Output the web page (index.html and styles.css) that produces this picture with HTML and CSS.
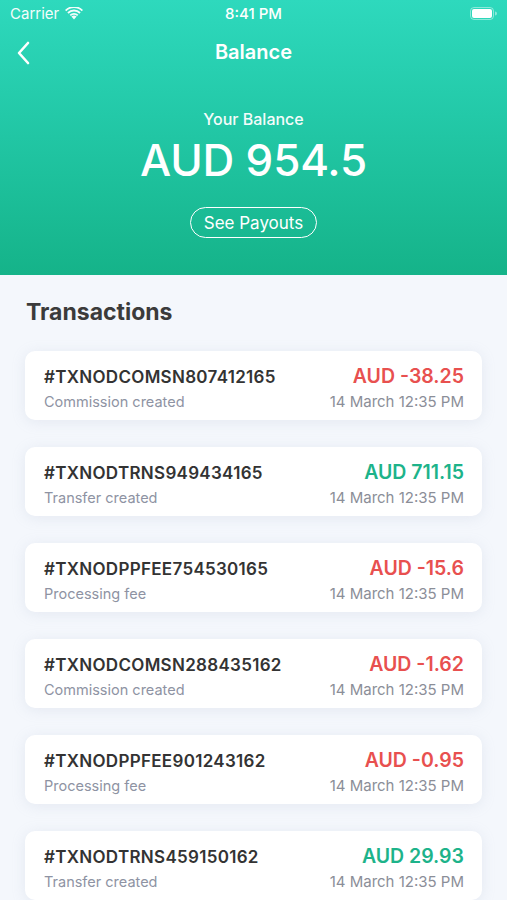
FILE: index.html
```html
<!DOCTYPE html>
<html lang="en">
<head>
  <meta charset="UTF-8">
  <link rel="stylesheet" href="styles.css">
</head>
<body>
  <!-- header with balance -->
  <div class="header">
    <div class="status-bar">
      <div class="status-left">
        <span>Carrier</span>
        <svg class="wifi" width="18" height="13" viewBox="0 0 18 13">
          <path d="M9 12.5 L6.4 9.6 A3.8 3.8 0 0 1 11.6 9.6 Z" fill="#fff"/>
          <path d="M4.6 7.7 A6.3 6.3 0 0 1 13.4 7.7 L12.1 9.1 A4.4 4.4 0 0 0 5.9 9.1 Z" fill="#fff"/>
          <path d="M2.3 5.3 A9.6 9.6 0 0 1 15.7 5.3 L14.4 6.7 A7.7 7.7 0 0 0 3.6 6.7 Z" fill="#fff"/>
          <path d="M0 2.9 A12.8 12.8 0 0 1 18 2.9 L16.7 4.3 A10.9 10.9 0 0 0 1.3 4.3 Z" fill="#fff"/>
        </svg>
      </div>
      <div class="status-time">8:41 PM</div>
      <div class="status-right">
        <svg width="27" height="13" viewBox="0 0 27 13">
          <rect x="0.5" y="0.5" width="23" height="12" rx="3.5" fill="none" stroke="rgba(255,255,255,0.45)"/>
          <rect x="2" y="2" width="20" height="9" rx="2" fill="#fff"/>
          <path d="M25 4.5 v4 a2 2 0 0 0 0 -4 z" fill="rgba(255,255,255,0.45)"/>
        </svg>
      </div>
    </div>

    <div class="nav-bar">
      <svg class="back" width="14" height="24" viewBox="0 0 14 24">
        <path d="M12 2 L3 12 L12 22" fill="none" stroke="#fff" stroke-width="2.6" stroke-linecap="round" stroke-linejoin="round"/>
      </svg>
      <div class="nav-title">Balance</div>
    </div>

    <div class="balance">
      <div class="balance-label">Your Balance</div>
      <div class="balance-amount">AUD 954.5</div>
      <div class="payouts-btn">See Payouts</div>
    </div>
  </div>

  <!-- transactions -->
  <div class="content">
    <h2 class="section-title">Transactions</h2>

    <div class="txn-list">
      <div class="txn-card">
        <div class="txn-row">
          <span class="txn-id">#TXNODCOMSN807412165</span>
          <span class="txn-amount neg">AUD -38.25</span>
        </div>
        <div class="txn-row">
          <span class="txn-type">Commission created</span>
          <span class="txn-date">14 March 12:35 PM</span>
        </div>
      </div>

      <div class="txn-card">
        <div class="txn-row">
          <span class="txn-id">#TXNODTRNS949434165</span>
          <span class="txn-amount pos">AUD 711.15</span>
        </div>
        <div class="txn-row">
          <span class="txn-type">Transfer created</span>
          <span class="txn-date">14 March 12:35 PM</span>
        </div>
      </div>

      <div class="txn-card">
        <div class="txn-row">
          <span class="txn-id">#TXNODPPFEE754530165</span>
          <span class="txn-amount neg">AUD -15.6</span>
        </div>
        <div class="txn-row">
          <span class="txn-type">Processing fee</span>
          <span class="txn-date">14 March 12:35 PM</span>
        </div>
      </div>

      <div class="txn-card">
        <div class="txn-row">
          <span class="txn-id">#TXNODCOMSN288435162</span>
          <span class="txn-amount neg">AUD -1.62</span>
        </div>
        <div class="txn-row">
          <span class="txn-type">Commission created</span>
          <span class="txn-date">14 March 12:35 PM</span>
        </div>
      </div>

      <div class="txn-card">
        <div class="txn-row">
          <span class="txn-id">#TXNODPPFEE901243162</span>
          <span class="txn-amount neg">AUD -0.95</span>
        </div>
        <div class="txn-row">
          <span class="txn-type">Processing fee</span>
          <span class="txn-date">14 March 12:35 PM</span>
        </div>
      </div>

      <div class="txn-card">
        <div class="txn-row">
          <span class="txn-id">#TXNODTRNS459150162</span>
          <span class="txn-amount pos">AUD 29.93</span>
        </div>
        <div class="txn-row">
          <span class="txn-type">Transfer created</span>
          <span class="txn-date">14 March 12:35 PM</span>
        </div>
      </div>
    </div>
  </div>
</body>
</html>
```

FILE: styles.css
```css
/* base */
* {
  box-sizing: border-box;
}
body {
  margin: 0;
  width: 507px;
  height: 900px;
  overflow: hidden;
  background: #f4f7fc;
  font-family: Inter, "Liberation Sans", sans-serif;
  color: #333;
}

/* header */
.header {
  height: 275px;
  background: linear-gradient(180deg, #2ed9bd 0%, #21c6a4 50%, #15b389 100%);
  color: #fff;
}
.status-bar {
  height: 27px;
  display: flex;
  align-items: center;
  justify-content: space-between;
  padding: 0 10px;
  font-size: 15px;
  position: relative;
}
.status-left {
  display: flex;
  align-items: center;
  gap: 6px;
  opacity: 0.95;
}
.status-time {
  position: absolute;
  left: 0;
  right: 0;
  text-align: center;
  font-weight: 500;
  font-size: 15px;
}
.status-right {
  display: flex;
  align-items: center;
}

.nav-bar {
  height: 50px;
  display: flex;
  align-items: center;
  justify-content: center;
  position: relative;
}
.back {
  position: absolute;
  left: 16px;
  top: 14px;
}
.nav-title {
  font-size: 20px;
  font-weight: 600;
}

.balance {
  display: flex;
  flex-direction: column;
  align-items: center;
  padding-top: 32px;
}
.balance-label {
  font-size: 16px;
  font-weight: 500;
  opacity: 0.95;
}
.balance-amount {
  font-size: 44px;
  font-weight: 500;
  margin-top: 4px;
  letter-spacing: -0.2px;
}
.payouts-btn {
  margin-top: 20px;
  height: 31px;
  padding: 0 13px;
  border: 1.5px solid #fff;
  border-radius: 16px;
  font-size: 17px;
  display: flex;
  align-items: center;
}

/* transactions */
.content {
  padding: 0 25px;
}
.section-title {
  margin: 23px 0 0 1px;
  font-size: 23px;
  font-weight: 700;
  color: #3b3b3b;
}
.txn-list {
  display: flex;
  flex-direction: column;
  gap: 27px;
  margin-top: 25px;
}
.txn-card {
  height: 69px;
  background: #fff;
  border-radius: 10px;
  box-shadow: 0 2px 14px rgba(160, 170, 195, 0.18);
  padding: 13px 18px 0 19px;
}
.txn-row {
  display: flex;
  justify-content: space-between;
  align-items: baseline;
}
.txn-row + .txn-row {
  margin-top: 4px;
}
.txn-id {
  font-size: 17px;
  font-weight: 600;
  letter-spacing: 0.3px;
  color: #333;
}
.txn-amount {
  font-size: 19.5px;
  font-weight: 600;
}
.txn-amount.neg {
  color: #e8504f;
}
.txn-amount.pos {
  color: #1db38a;
}
.txn-type,
.txn-date {
  font-size: 14.5px;
  color: #8e93a3;
}
.txn-date {
  font-size: 15px;
  color: #8b8e98;
}
```
